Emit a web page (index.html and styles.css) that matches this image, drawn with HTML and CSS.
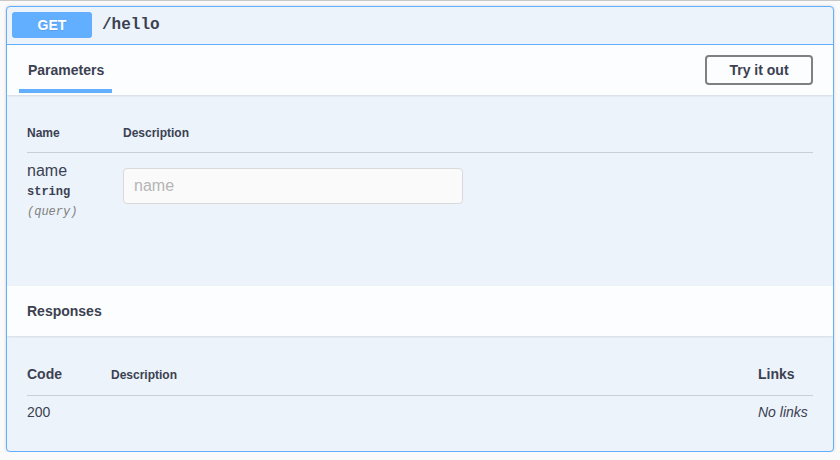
FILE: index.html
```html
<!DOCTYPE html>
<html lang="en">
<head>
<meta charset="utf-8">
<title>GET /hello</title>
<link rel="stylesheet" href="styles.css">
</head>
<body>
<div class="top-rule"></div>
<div class="opblock">
  <div class="summary">
    <span class="method">GET</span>
    <span class="path">/hello</span>
  </div>
  <div class="section-header">
    <div class="tab">Parameters</div>
    <button class="try-out">Try it out</button>
  </div>
  <div class="params-body">
    <div class="params-head">
      <div class="col-name">Name</div>
      <div class="col-desc">Description</div>
    </div>
    <div class="params-row">
      <div class="col-name">
        <div class="param-name">name</div>
        <div class="param-type">string</div>
        <div class="param-in">(query)</div>
      </div>
      <div class="col-desc">
        <input class="param-input" type="text" placeholder="name">
      </div>
    </div>
  </div>
  <div class="section-header resp-header">
    <h4 class="resp-title">Responses</h4>
  </div>
  <div class="resp-body">
    <div class="resp-head">
      <div class="col-code code-head">Code</div>
      <div class="col-rdesc desc-head">Description</div>
      <div class="col-links links-head">Links</div>
    </div>
    <div class="resp-row">
      <div class="col-code">200</div>
      <div class="col-rdesc"></div>
      <div class="col-links no-links">No links</div>
    </div>
  </div>
</div>
</body>
</html>
```

FILE: styles.css
```css
* { box-sizing: border-box; }

body {
  margin: 0;
  background: #fafafa;
  font-family: "Liberation Sans", Arial, sans-serif;
  color: #3b4151;
}

.top-rule {
  height: 1px;
  background: #c8c8c8;
}

.opblock {
  margin: 5px 6px 0 6px;
  height: 446px;
  border: 1px solid #61affe;
  border-radius: 4px;
  background: #ecf3fb;
  box-shadow: 0 0 3px rgba(0, 0, 0, 0.19);
  display: flex;
  flex-direction: column;
  overflow: hidden;
}

.summary {
  display: flex;
  align-items: center;
  padding: 5px 5px 6px;
  border-bottom: 1px solid #61affe;
}

.method {
  width: 80px;
  height: 26px;
  line-height: 26px;
  text-align: center;
  background: #61affe;
  color: #fff;
  font-size: 14px;
  font-weight: 700;
  border-radius: 3px;
  text-shadow: 0 1px 0 rgba(0, 0, 0, 0.1);
}

.path {
  padding: 0 10px;
  font-family: "Liberation Mono", "Courier New", monospace;
  font-weight: 700;
  font-size: 16px;
  color: #3b4151;
}

.section-header {
  height: 50px;
  display: flex;
  align-items: center;
  justify-content: space-between;
  padding: 0 20px 0 12px;
  background: rgba(255, 255, 255, 0.8);
  box-shadow: 0 1px 2px rgba(0, 0, 0, 0.1);
  position: relative;
}

.tab {
  align-self: flex-end;
  margin-bottom: 2px;
  padding: 0 8px 11px 9px;
  line-height: 16px;
  font-size: 14px;
  font-weight: 700;
  border-bottom: 4px solid #61affe;
}

.try-out {
  width: 108px;
  height: 30px;
  padding: 0;
  background: transparent;
  border: 2px solid #808080;
  border-radius: 4px;
  font-family: "Liberation Sans", Arial, sans-serif;
  font-size: 14px;
  font-weight: 700;
  color: #3b4151;
}

.params-body {
  height: 191px;
  padding: 20px 20px 0 20px;
}

.params-head {
  display: flex;
  padding: 11px 0 12px;
  line-height: 14px;
  font-size: 12px;
  font-weight: 700;
  border-bottom: 1px solid rgba(59, 65, 81, 0.2);
}

.col-name { width: 96px; flex: none; }
.col-desc { flex: 1; }

.params-row { display: flex; }

.param-name {
  padding-top: 9px;
  font-size: 16px;
  line-height: 18px;
}

.param-type {
  padding: 5px 0 0;
  font-family: "Liberation Mono", "Courier New", monospace;
  font-weight: 700;
  font-size: 12px;
  line-height: 14px;
}

.param-in {
  padding-top: 6px;
  font-family: "Liberation Mono", "Courier New", monospace;
  font-style: italic;
  font-size: 12px;
  line-height: 14px;
  color: #808080;
}

.param-input {
  display: block;
  margin-top: 15px;
  width: 340px;
  height: 36px;
  padding: 8px 10px;
  border: 1px solid #d9d9d9;
  border-radius: 4px;
  background: #fafafa;
  font-family: "Liberation Sans", Arial, sans-serif;
  font-size: 16px;
  color: #3b4151;
}

.param-input::placeholder { color: #b5b5b5; }

.resp-header { padding-left: 20px; }

.resp-title {
  margin: 0;
  font-size: 14px;
  font-weight: 700;
  line-height: 16px;
}

.resp-body {
  flex: 1;
  padding: 20px 20px 0 20px;
}

.resp-head {
  display: flex;
  align-items: baseline;
  padding: 10px 0 11px;
  line-height: 17px;
  border-bottom: 1px solid rgba(59, 65, 81, 0.2);
}

.resp-row {
  display: flex;
  padding: 8px 0;
  line-height: 17px;
  font-size: 14px;
}

.col-code { width: 84px; flex: none; }
.col-rdesc { flex: 1; }
.col-links { width: 55px; flex: none; }

.code-head, .links-head { font-size: 14px; font-weight: 700; }
.desc-head { font-size: 12px; font-weight: 700; }

.no-links { font-style: italic; }
```
